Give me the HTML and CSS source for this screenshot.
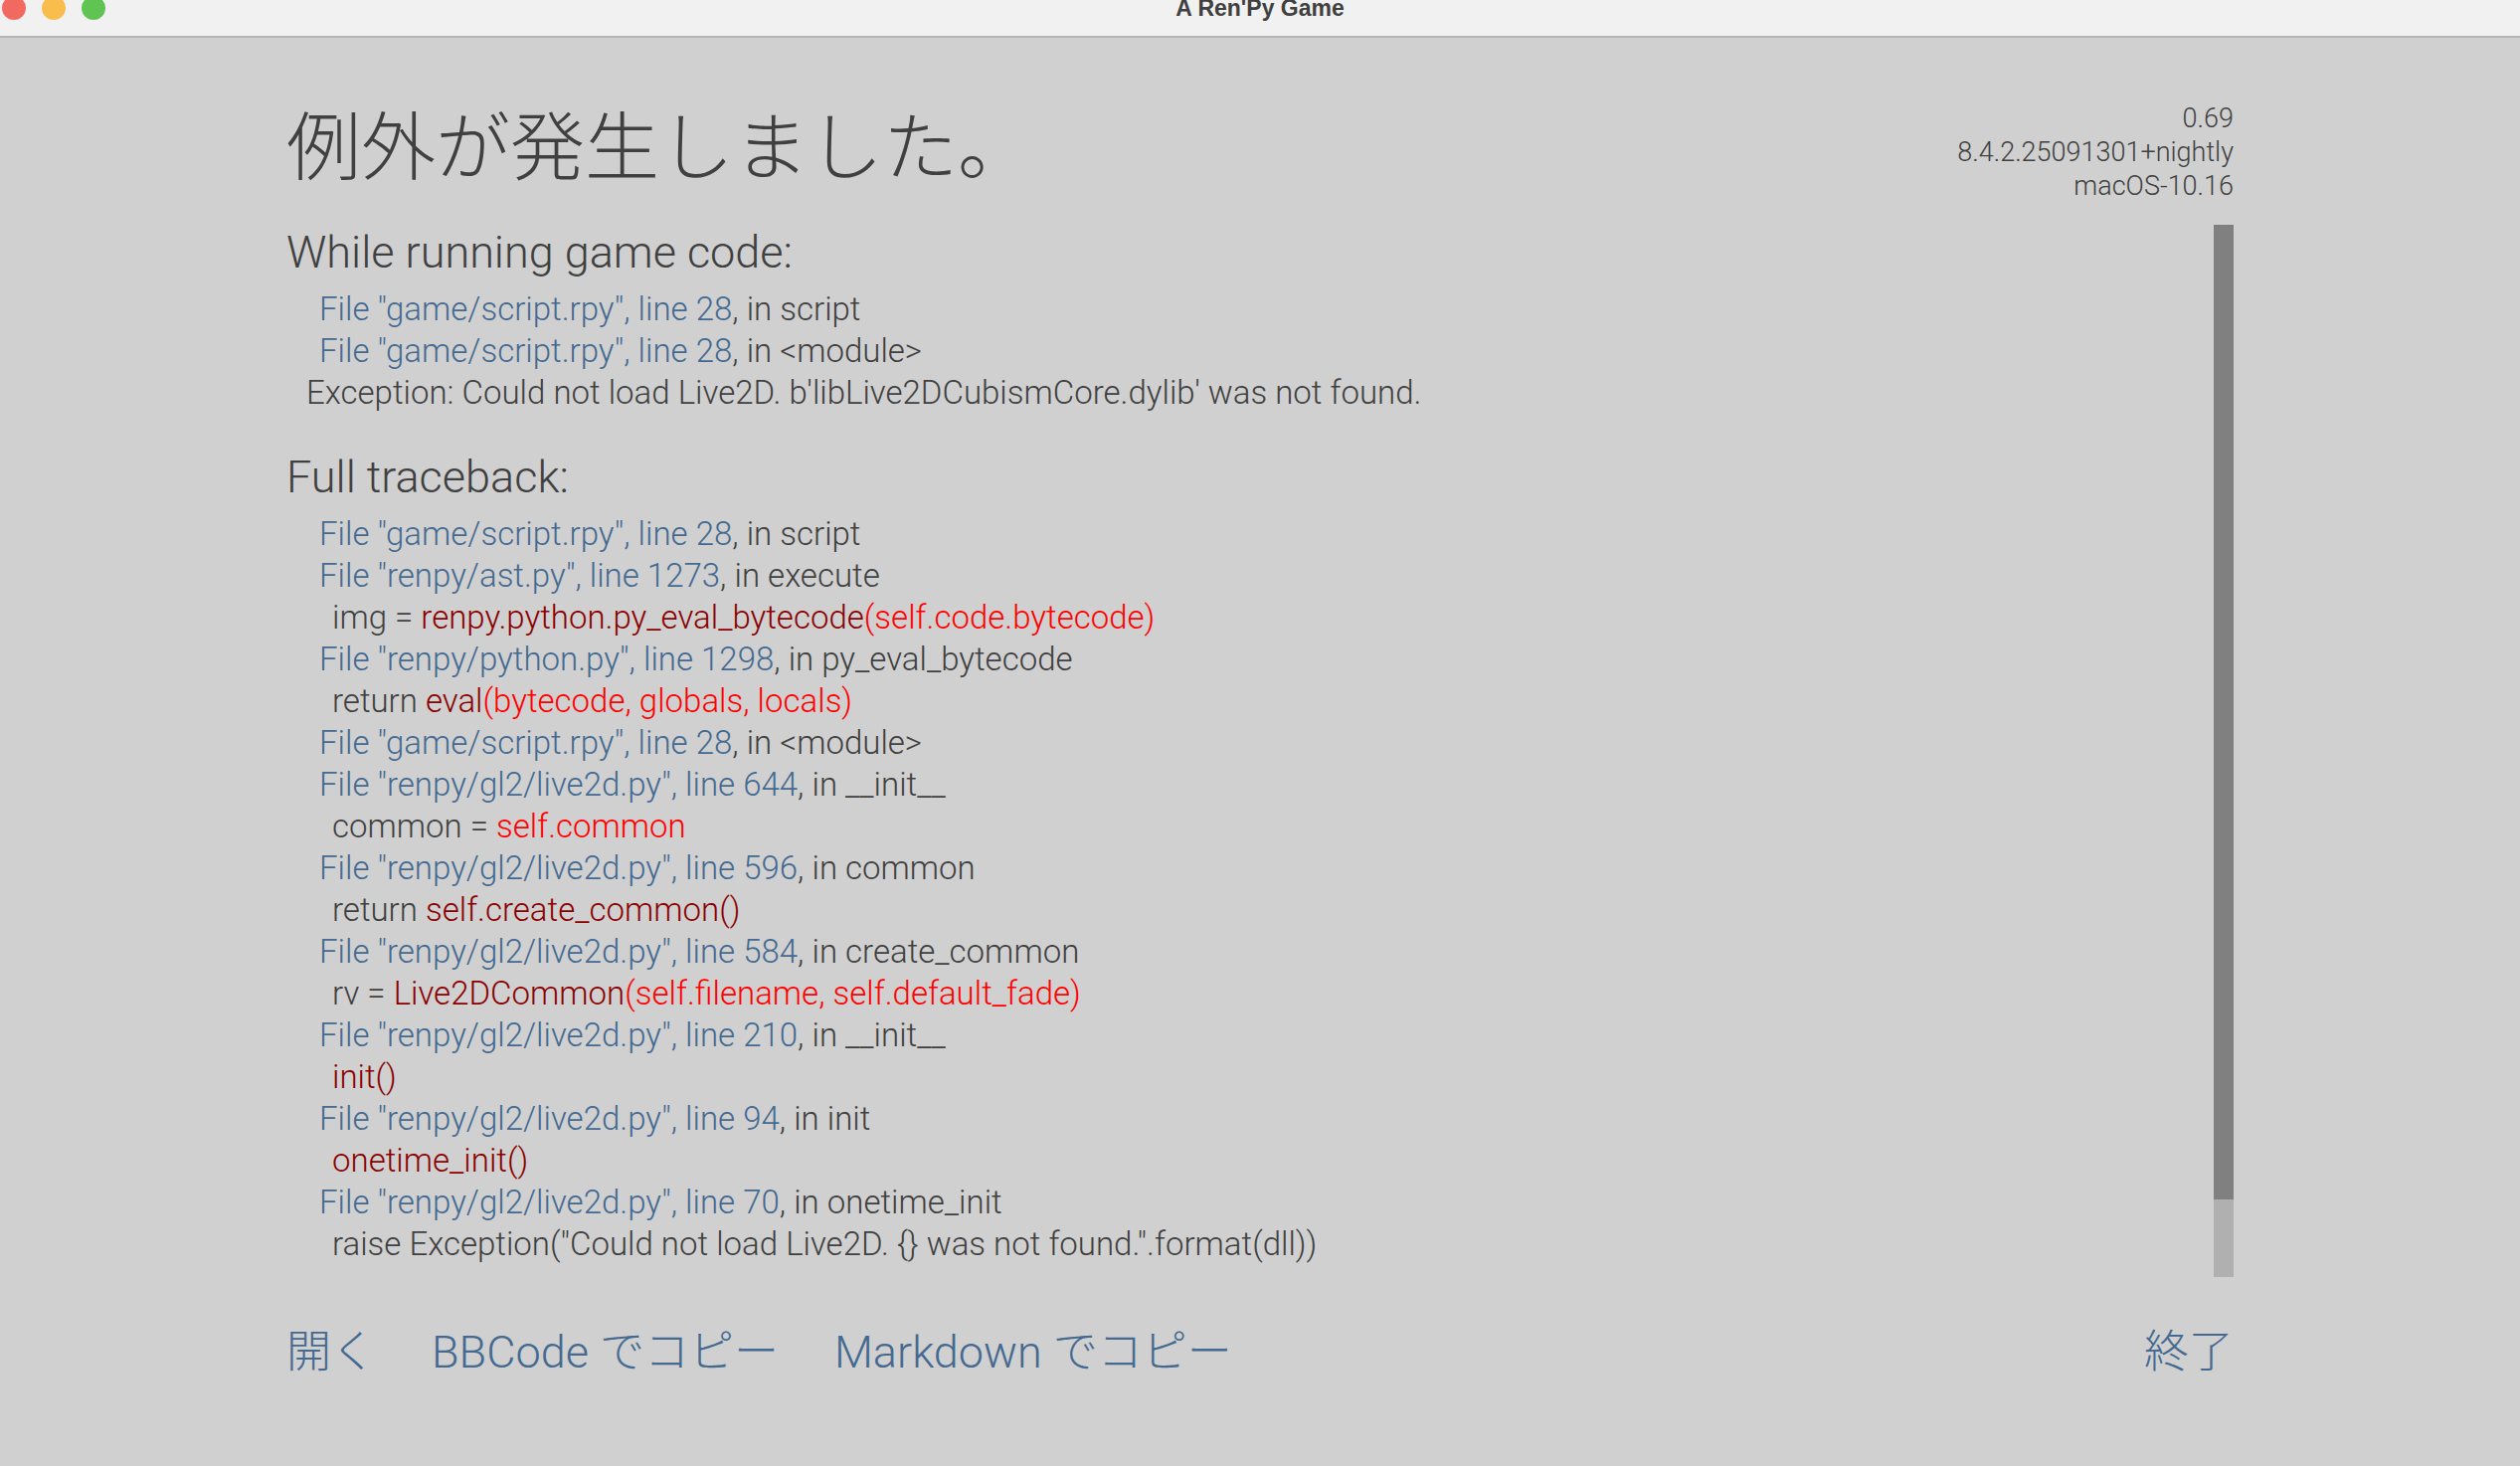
FILE: index.html
```html
<!DOCTYPE html>
<html lang="ja">
<head>
<meta charset="utf-8">
<title>A Ren'Py Game</title>
<link rel="stylesheet" href="styles.css">
</head>
<body>
<header class="titlebar">
  <div class="lights"><span class="light red"></span><span class="light yellow"></span><span class="light green"></span></div>
  <div class="wintitle">A Ren'Py Game</div>
</header>
<main class="screen">
  <div class="top">
    <h1 class="title">例外が発生しました。</h1>
    <div class="version"><div>0.69</div><div>8.4.2.25091301+nightly</div><div>macOS-10.16</div></div>
  </div>
  <div class="scrollarea">
    <div class="content">
      <h2 class="head">While running game code:</h2>
      <div class="line file"><a>File "game/script.rpy", line 28</a>, in script</div>
      <div class="line file"><a>File "game/script.rpy", line 28</a>, in &lt;module&gt;</div>
      <div class="line exc">Exception: Could not load Live2D. b'libLive2DCubismCore.dylib' was not found.</div>
      <h2 class="head second">Full traceback:</h2>
      <div class="line file"><a>File "game/script.rpy", line 28</a>, in script</div>
      <div class="line file"><a>File "renpy/ast.py", line 1273</a>, in execute</div>
      <div class="line code">img = <b>renpy.python.py_eval_bytecode</b><i>(self.code.bytecode)</i></div>
      <div class="line file"><a>File "renpy/python.py", line 1298</a>, in py_eval_bytecode</div>
      <div class="line code">return <b>eval</b><i>(bytecode, globals, locals)</i></div>
      <div class="line file"><a>File "game/script.rpy", line 28</a>, in &lt;module&gt;</div>
      <div class="line file"><a>File "renpy/gl2/live2d.py", line 644</a>, in __init__</div>
      <div class="line code">common = <i>self.common</i></div>
      <div class="line file"><a>File "renpy/gl2/live2d.py", line 596</a>, in common</div>
      <div class="line code">return <b>self.create_common()</b></div>
      <div class="line file"><a>File "renpy/gl2/live2d.py", line 584</a>, in create_common</div>
      <div class="line code">rv = <b>Live2DCommon</b><i>(self.filename, self.default_fade)</i></div>
      <div class="line file"><a>File "renpy/gl2/live2d.py", line 210</a>, in __init__</div>
      <div class="line code"><b>init()</b></div>
      <div class="line file"><a>File "renpy/gl2/live2d.py", line 94</a>, in init</div>
      <div class="line code"><b>onetime_init()</b></div>
      <div class="line file"><a>File "renpy/gl2/live2d.py", line 70</a>, in onetime_init</div>
      <div class="line code">raise Exception("Could not load Live2D. {} was not found.".format(dll))</div>
    </div>
    <div class="scrollbar"><div class="thumb"></div></div>
  </div>
  <nav class="buttons">
    <a class="btn">開く</a>
    <a class="btn">BBCode でコピー</a>
    <a class="btn">Markdown でコピー</a>
    <a class="btn quit">終了</a>
  </nav>
</main>
</body>
</html>
```
FILE: styles.css
```css
html, body { margin: 0; padding: 0; }
body {
  width: 2534px; height: 1474px; overflow: hidden;
  background: #d0d0d0; color: #404040;
  font-family: Roboto, "Noto Sans CJK JP", sans-serif;
  font-weight: 300;
  display: flex; flex-direction: column;
}
.titlebar {
  height: 36px; flex: none; background: #f1f1f1;
  border-bottom: 2px solid #b4b4b4;
  display: flex; justify-content: center; position: relative; overflow: hidden;
}
.lights { position: absolute; left: 2px; top: -4px; display: flex; gap: 16px; }
.light { width: 24px; height: 24px; border-radius: 50%; }
.red { background: #f2695f; }
.yellow { background: #f8bd4c; }
.green { background: #60c453; }
.wintitle {
  font: 700 23px/20px "Liberation Sans", sans-serif; color: #404040;
  margin-top: -2px;
}
.screen { flex: 1; display: flex; flex-direction: column; padding: 0 288px; }
.top { height: 188px; display: flex; justify-content: space-between; }
.title { margin: 66px 0 0; font-size: 75px; line-height: 90px; font-weight: 300; }
.version { margin-top: 64px; font-size: 27px; line-height: 34px; text-align: right; }
.scrollarea { height: 1058px; display: flex; justify-content: space-between; }
.content { flex: 1; }
.head { margin: 0; font-size: 45px; line-height: 56px; font-weight: 300; }
.second { margin-top: 36px; }
.line { font-size: 33px; line-height: 42px; white-space: pre; }
.head + .line { margin-top: 8px; }
.file { padding-left: 33px; }
.exc { padding-left: 20px; }
.code { padding-left: 46px; }
.file a { color: #456a91; }
.line b { font-weight: 300; color: #8b0000; }
.line i { font-style: normal; color: #ff0000; }
.scrollbar { width: 20px; background: #b0b0b0; flex: none; }
.thumb { height: 980px; background: #808080; }
.buttons { margin-top: 48px; display: flex; gap: 56px; font-size: 45px; line-height: 56px; color: #456a91; }
.quit { margin-left: auto; }
```
